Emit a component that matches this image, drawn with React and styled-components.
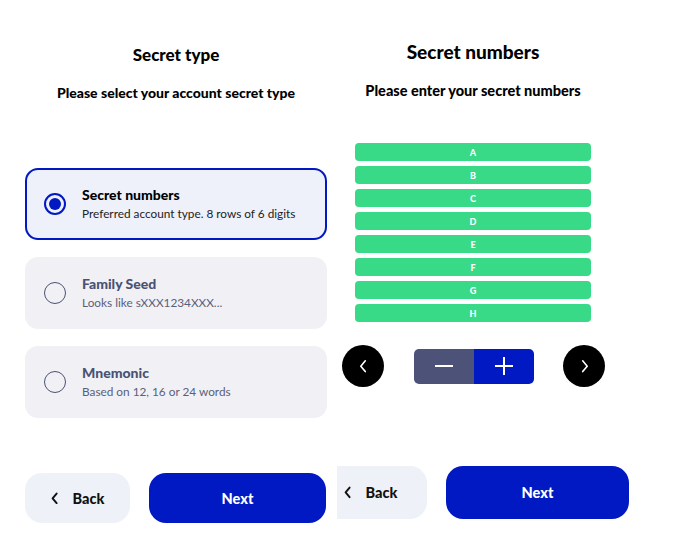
import React, { useState } from "react";
import styled, { createGlobalStyle } from "styled-components";

const GlobalStyle = createGlobalStyle`
  html, body {
    margin: 0;
    padding: 0;
    background: #ffffff;
    font-family: "Lato", "Liberation Sans", sans-serif;
  }
  * { box-sizing: border-box; }
`;

const BLUE = "#0019c2";

const secretTypes = [
  { id: "numbers", title: "Secret numbers", desc: "Preferred account type. 8 rows of 6 digits" },
  { id: "seed", title: "Family Seed", desc: "Looks like sXXX1234XXX..." },
  { id: "mnemonic", title: "Mnemonic", desc: "Based on 12, 16 or 24 words" },
];

const rows = ["A", "B", "C", "D", "E", "F", "G", "H"];

const Page = styled.div`
  display: flex;
  width: 690px;
  height: 544px;
  overflow: hidden;
`;

const Panel = styled.section`
  width: ${(p) => p.$width}px;
  flex-shrink: 0;
  display: flex;
  flex-direction: column;
  align-items: stretch;
  overflow: hidden;
  padding-top: ${(p) => p.$top}px;
`;

const Title = styled.h2`
  margin: 0;
  text-align: center;
  font-size: ${(p) => p.$size}px;
  line-height: 22px;
  font-weight: 900;
  color: #000;
  padding-left: ${(p) => p.$pl || 0}px;
  padding-right: ${(p) => p.$pr || 0}px;
`;

const Subtitle = styled.p`
  margin: ${(p) => p.$gap}px 0 0;
  text-align: center;
  font-size: ${(p) => p.$size}px;
  line-height: 18px;
  font-weight: 900;
  color: #000;
  padding-left: ${(p) => p.$pl || 0}px;
  padding-right: ${(p) => p.$pr || 0}px;
`;

const CardList = styled.div`
  display: flex;
  flex-direction: column;
  gap: 17px;
  margin: 66px 10px 0 25px;
`;

const Card = styled.button`
  all: unset;
  box-sizing: border-box;
  display: flex;
  align-items: center;
  gap: 16px;
  height: 72px;
  padding: 0 16px 0 17px;
  border-radius: 13px;
  cursor: pointer;
  border: 2px solid ${(p) => (p.$active ? BLUE : "transparent")};
  background: ${(p) => (p.$active ? "#eef1f9" : "#f1f1f5")};
  color: ${(p) => (p.$active ? "#000" : "#4b5173")};
`;

const Radio = styled.span`
  box-sizing: border-box;
  width: 22px;
  height: 22px;
  border-radius: 50%;
  flex-shrink: 0;
  display: flex;
  align-items: center;
  justify-content: center;
  border: ${(p) => (p.$active ? `2.5px solid ${BLUE}` : "1.5px solid #4b5173")};
  &::after {
    content: "";
    display: ${(p) => (p.$active ? "block" : "none")};
    width: 12px;
    height: 12px;
    border-radius: 50%;
    background: ${BLUE};
  }
`;

const CardText = styled.div`
  display: flex;
  flex-direction: column;
  gap: 3px;
`;

const CardTitle = styled.span`
  font-size: 14px;
  line-height: 16px;
  font-weight: 900;
`;

const CardDesc = styled.span`
  font-size: 11.8px;
  line-height: 15px;
  font-weight: 400;
  color: ${(p) => (p.$active ? "#222" : "#5b6079")};
`;

const Footer = styled.div`
  display: flex;
  gap: ${(p) => p.$gap}px;
  margin-top: ${(p) => p.$top}px;
  margin-left: ${(p) => p.$left}px;
`;

const BackButton = styled.button`
  all: unset;
  box-sizing: border-box;
  display: flex;
  align-items: center;
  justify-content: center;
  gap: 14px;
  width: ${(p) => p.$w}px;
  height: ${(p) => p.$h}px;
  flex-shrink: 0;
  padding-right: ${(p) => p.$pr || 0}px;
  border-radius: 17px;
  background: #eef1f8;
  color: #111;
  font-size: 14.5px;
  font-weight: 900;
  cursor: pointer;
`;

const NextButton = styled.button`
  all: unset;
  box-sizing: border-box;
  display: flex;
  align-items: center;
  justify-content: center;
  width: ${(p) => p.$w}px;
  height: ${(p) => p.$h}px;
  flex-shrink: 0;
  border-radius: 17px;
  background: ${BLUE};
  color: #fff;
  font-size: 14.5px;
  font-weight: 900;
  cursor: pointer;
`;

const RowList = styled.div`
  display: flex;
  flex-direction: column;
  gap: 5px;
  width: 236px;
  margin: 43px 0 0 18px;
`;

const Row = styled.div`
  height: 18px;
  border-radius: 4px;
  background: #38d987;
  color: #fff;
  font-size: 9px;
  font-weight: 900;
  display: flex;
  align-items: center;
  justify-content: center;
`;

const Controls = styled.div`
  display: flex;
  align-items: center;
  justify-content: space-between;
  width: 263px;
  margin: 23px 0 0 5px;
`;

const RoundButton = styled.button`
  all: unset;
  box-sizing: border-box;
  width: 42px;
  height: 42px;
  border-radius: 50%;
  background: #000;
  display: flex;
  align-items: center;
  justify-content: center;
  cursor: pointer;
`;

const Stepper = styled.div`
  display: flex;
  width: 120px;
  height: 35px;
  border-radius: 5px;
  overflow: hidden;
`;

const StepButton = styled.button`
  all: unset;
  flex: 1;
  display: flex;
  align-items: center;
  justify-content: center;
  background: ${(p) => (p.$plus ? BLUE : "#4d5378")};
  cursor: pointer;
`;

const Chevron = ({ dir = "left", size = 10, color = "#000", width = 2 }) => (
  <svg width={size} height={size * 1.6} viewBox="0 0 10 16" fill="none">
    <polyline
      points={dir === "left" ? "7,2 2,8 7,14" : "3,2 8,8 3,14"}
      stroke={color}
      strokeWidth={width}
      strokeLinecap="round"
      strokeLinejoin="round"
    />
  </svg>
);

const Sign = ({ plus }) => (
  <svg width="20" height="20" viewBox="0 0 20 20">
    <line x1="1" y1="10" x2="19" y2="10" stroke="#fff" strokeWidth="2" />
    {plus && <line x1="10" y1="1" x2="10" y2="19" stroke="#fff" strokeWidth="2" />}
  </svg>
);

export default function App() {
  const [selected, setSelected] = useState("numbers");

  return (
    <Page>
      <GlobalStyle />
      <Panel $width={337} $top={44}>
        <Title $size={17} $pl={15}>Secret type</Title>
        <Subtitle $gap={18} $size={14} $pl={15}>Please select your account secret type</Subtitle>
        <CardList>
          {secretTypes.map((t) => {
            const active = t.id === selected;
            return (
              <Card key={t.id} $active={active} onClick={() => setSelected(t.id)}>
                <Radio $active={active} />
                <CardText>
                  <CardTitle>{t.title}</CardTitle>
                  <CardDesc $active={active}>{t.desc}</CardDesc>
                </CardText>
              </Card>
            );
          })}
        </CardList>
        <Footer $top={55} $gap={19} $left={25}>
          <BackButton $w={105} $h={50}>
            <Chevron dir="left" size={8} color="#111" width={2.4} />
            Back
          </BackButton>
          <NextButton $w={177} $h={50}>Next</NextButton>
        </Footer>
      </Panel>
      <Panel $width={353} $top={41}>
        <Title $size={19} $pr={81}>Secret numbers</Title>
        <Subtitle $gap={19} $size={14.5} $pr={81}>Please enter your secret numbers</Subtitle>
        <RowList>
          {rows.map((r) => (
            <Row key={r}>{r}</Row>
          ))}
        </RowList>
        <Controls>
          <RoundButton aria-label="previous">
            <Chevron dir="left" size={9} color="#fff" width={1.8} />
          </RoundButton>
          <Stepper>
            <StepButton aria-label="remove">
              <Sign />
            </StepButton>
            <StepButton $plus aria-label="add">
              <Sign plus />
            </StepButton>
          </Stepper>
          <RoundButton aria-label="next">
            <Chevron dir="right" size={9} color="#fff" width={1.8} />
          </RoundButton>
        </Controls>
        <Footer $top={79} $gap={19} $left={-15}>
          <BackButton $w={105} $h={53} $pr={8}>
            <Chevron dir="left" size={8} color="#111" width={2.4} />
            Back
          </BackButton>
          <NextButton $w={183} $h={53}>Next</NextButton>
        </Footer>
      </Panel>
    </Page>
  );
}
